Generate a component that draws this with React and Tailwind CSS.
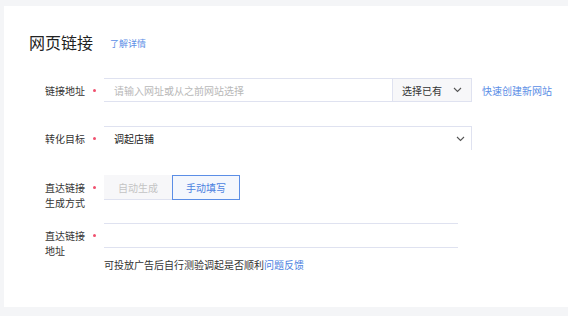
import React from "react";

const font = { fontFamily: '"Noto Sans CJK SC", "Noto Sans", sans-serif' };

function Label({ lines, className = "" }) {
  return (
    <div className={"w-[104px] shrink-0 relative pl-[45px] " + className}>
      <div className="flex flex-col text-[10px] leading-[15px] text-[#333]">
        {lines.map((l) => (
          <span key={l} className="whitespace-nowrap">{l}</span>
        ))}
      </div>
      <span className="absolute left-[93px] top-[6px] w-[3px] h-[3px] rounded-full bg-[#f0506e]"></span>
    </div>
  );
}

function Chevron() {
  return (
    <svg width="9" height="6" viewBox="0 0 9 6">
      <path d="M1 1 L4.5 4.5 L8 1" fill="none" stroke="#555" strokeWidth="1.1" />
    </svg>
  );
}

export default function App() {
  return (
    <div className="w-[568px] h-[316px] bg-[#f4f5f7] pt-[6px] pl-[4px] overflow-hidden" style={font}>
      <div className="w-[564px] h-[301px] bg-white">
        <div className="flex items-end pl-[25px] pt-[26px]">
          <span className="text-[16px] leading-[20px] text-[#222]">网页链接</span>
          <span className="text-[9px] leading-[14px] text-[#5b8ee6] ml-[17px] mb-[1px]">了解详情</span>
        </div>

        <div className="flex items-center mt-[26px] h-[24px] ml-[-4px]">
          <Label lines={["链接地址"]} className="mt-[1px]" />
          <div className="flex h-[24px] w-[368px] border-y border-[#dfe2f0]">
            <div className="flex-1 flex items-center pl-[10px] text-[10px] text-[#b8b8b8]">请输入网址或从之前网站选择</div>
            <div className="w-[80px] flex items-center justify-between px-[9px] border-x border-[#dfe2f0] bg-[#f7f7f9] text-[10px] text-[#333]">
              <span>选择已有</span>
              <Chevron />
            </div>
          </div>
          <span className="ml-[10px] text-[10px] text-[#5b8ee6]">快速创建新网站</span>
        </div>

        <div className="flex items-center mt-[24px] h-[24px] ml-[-4px]">
          <Label lines={["转化目标"]} className="mt-[1px]" />
          <div className="flex items-center justify-between h-[24px] w-[368px] border-t border-r border-[#dfe2f0] pl-[10px] pr-[6px] text-[10px] text-[#222]">
            <span>调起店铺</span>
            <Chevron />
          </div>
        </div>

        <div className="flex items-start mt-[25px] ml-[-4px]">
          <Label lines={["直达链接", "生成方式"]} className="mt-[5px]" />
          <div className="flex">
            <div className="w-[68px] h-[25px] flex items-center justify-center bg-[#f7f7f9] border-b border-[#dfe2f0] text-[10px] text-[#c4c4c4]">自动生成</div>
            <div className="w-[68px] h-[25px] flex items-center justify-center bg-[#f4f7fd] border border-[#5b8ee6] text-[10px] text-[#4a7fe0]">手动填写</div>
          </div>
        </div>

        <div className="flex items-start mt-[13px] ml-[-4px]">
          <Label lines={["直达链接", "地址"]} className="mt-[5px]" />
          <div className="flex flex-col">
            <div className="w-[354px] h-[25px] border-y border-[#dfe2f0]"></div>
            <div className="mt-[10px] text-[10px] leading-[14px] text-[#333] whitespace-nowrap">
              可投放广告后自行测验调起是否顺利<span className="text-[#4a7fe0]">问题反馈</span>
            </div>
          </div>
        </div>
      </div>
    </div>
  );
}
